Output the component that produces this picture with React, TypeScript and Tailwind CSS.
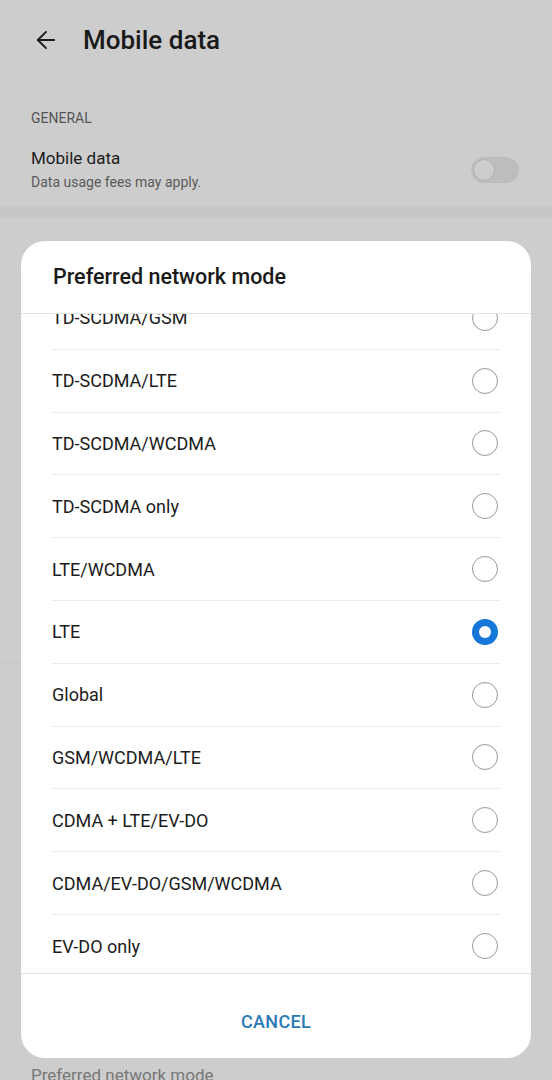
import { ArrowLeft } from "lucide-react";

const modes = [
  "TD-SCDMA/GSM",
  "TD-SCDMA/LTE",
  "TD-SCDMA/WCDMA",
  "TD-SCDMA only",
  "LTE/WCDMA",
  "LTE",
  "Global",
  "GSM/WCDMA/LTE",
  "CDMA + LTE/EV-DO",
  "CDMA/EV-DO/GSM/WCDMA",
  "EV-DO only",
];

const selected = "LTE";

function Radio({ checked }: { checked: boolean }) {
  return checked ? (
    <div className="w-[26px] h-[26px] rounded-full bg-[#1677d8] flex items-center justify-center">
      <div className="w-[12px] h-[12px] rounded-full bg-white" />
    </div>
  ) : (
    <div className="w-[26px] h-[26px] rounded-full border-[1.5px] border-[#9a9a9a]" />
  );
}

export default function App() {
  return (
    <div
      className="relative w-[552px] h-[1080px] overflow-hidden bg-[#cdcdcd]"
      style={{ fontFamily: "Roboto, 'Noto Sans', sans-serif" }}
    >
      {/* page behind the dialog (dimmed) */}
      <div className="flex items-center h-[80px] px-[32px] gap-[23px]">
        <ArrowLeft size={28} strokeWidth={1.6} className="text-[#1a1a1a]" />
        <span className="text-[26px] font-medium text-[#1a1a1a]">Mobile data</span>
      </div>
      <div className="pt-[28px] px-[31px] text-[14px] text-[#555] h-[54px]">GENERAL</div>
      <div className="flex items-center justify-between pl-[31px] pr-[33px] h-[73px] pb-[2px]">
        <div className="flex flex-col">
          <span className="text-[17px] text-[#1c1c1c] leading-[24px]">Mobile data</span>
          <span className="text-[14px] text-[#5a5a5a] leading-[24px]">Data usage fees may apply.</span>
        </div>
        <div className="w-[48px] h-[26px] rounded-full bg-[#bdbdbd] p-[2px] flex items-center">
          <div className="w-[22px] h-[22px] rounded-full bg-[#cdcdcd] border-[1.5px] border-[#b0b0b0]" />
        </div>
      </div>
      <div className="h-[10px] bg-[#c7c7c7]" />
      <div className="h-[445px]" />
      <div className="h-[3px] bg-[#c9c9c9] w-[22px]" />
      <div className="h-[398px]" />
      <div className="px-[31px] text-[17px] text-[#777]">Preferred network mode</div>

      {/* dialog */}
      <div className="absolute left-[21px] top-[241px] w-[510px] h-[817px] bg-white rounded-[24px] flex flex-col overflow-hidden">
        <div className="h-[73px] shrink-0 flex items-center px-[32px] border-b border-[#e4e4e4]">
          <span className="text-[21.5px] font-medium text-[#1a1a1a]">Preferred network mode</span>
        </div>
        <div className="h-[659px] shrink-0 overflow-hidden">
          <div className="mt-[-27px] px-[31px]">
            {modes.map((m, i) => (
              <div
                key={m}
                className={`h-[62.8px] flex items-center justify-between ${
                  i < modes.length - 1 ? "border-b border-[#ececec]" : ""
                }`}
              >
                <span className="text-[18px] text-[#1c1c1c]">{m}</span>
                <div className="pr-[2px]">
                  <Radio checked={m === selected} />
                </div>
              </div>
            ))}
          </div>
        </div>
        <div className="flex-1 border-t border-[#e4e4e4] flex items-center justify-center pt-[10px]">
          <span className="text-[18px] font-medium text-[#2b7ab6] tracking-[0.3px]">CANCEL</span>
        </div>
      </div>
    </div>
  );
}
